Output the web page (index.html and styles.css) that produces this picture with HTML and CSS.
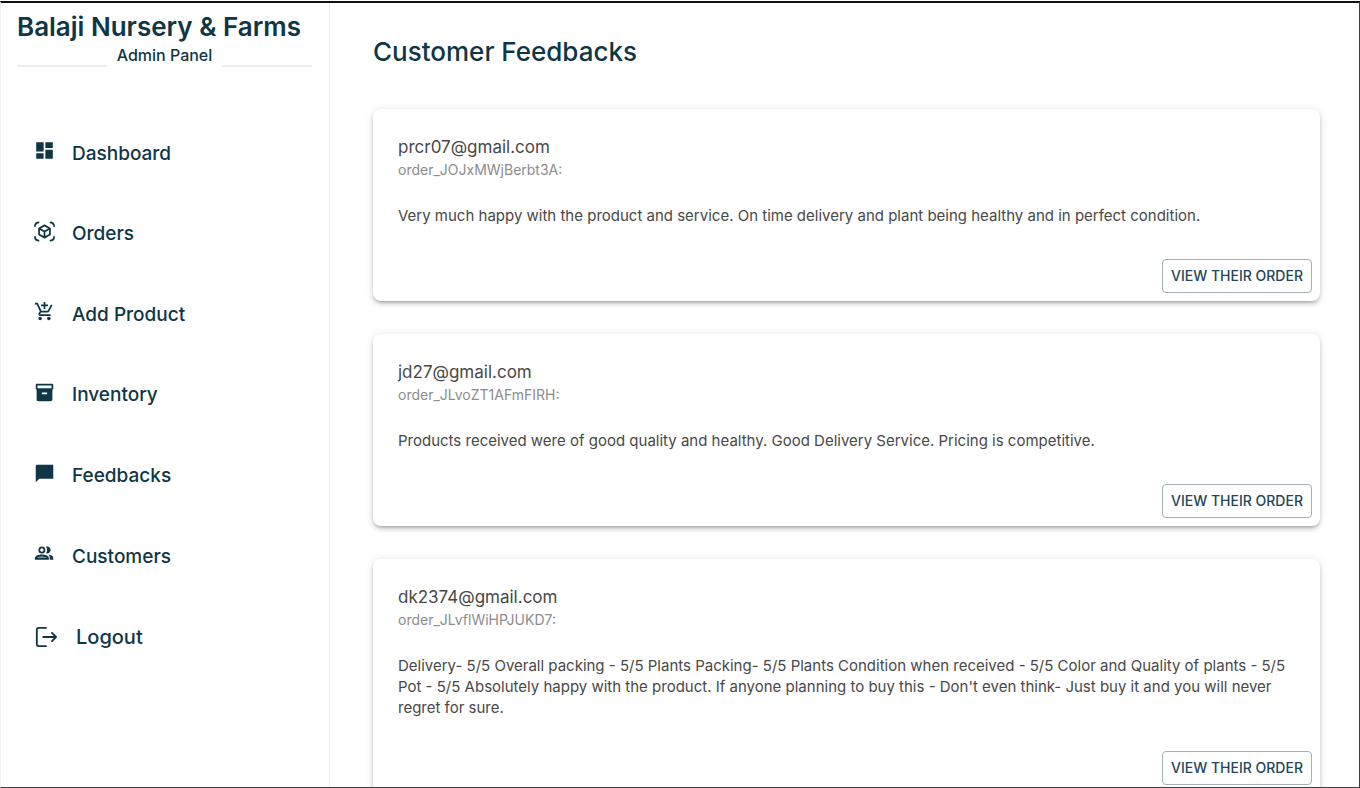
FILE: index.html
```html
<!DOCTYPE html>
<html lang="en">
<head>
<meta charset="utf-8">
<meta name="viewport" content="width=device-width, initial-scale=1">
<title>Customer Feedbacks - Balaji Nursery &amp; Farms</title>
<link rel="stylesheet" href="styles.css">
</head>
<body>
<div class="app">
  <aside class="sidebar">
    <div class="brand">Balaji Nursery &amp; Farms</div>
    <div class="panel-label"><span>Admin Panel</span></div>
    <nav>
      <ul class="menu">
        <li><a href="#dashboard"><svg class="icon" viewBox="0 0 24 24"><path d="M2.500 13h8.500V2.500H2.500V13zm0 8.500h8.500V15H2.500v6.500zm10.500 0h8.500V11H13v10.500zm0-19V9h8.500V2.500H13z"/></svg>Dashboard</a></li>
        <li><a href="#orders"><svg class="icon" viewBox="0 0 24 24"><g fill="none" stroke="currentColor" stroke-width="2"><path d="M1 6.500C1 3.500 3 1.500 6 1.500M18 1.500c3 0 5 2 5 5M23 17.500c0 3-2 5-5 5M6 22.500c-3 0-5-2-5-5"/><path d="M12 5l6.200 3.500v7L12 19l-6.200-3.500v-7zM5.800 8.500L12 12l6.200-3.500M12 12v7" stroke-linejoin="round"/></g></svg>Orders</a></li>
        <li><a href="#add-product"><svg class="icon" viewBox="0 0 24 24"><path d="M11 9h2V6h3V4h-3V1h-2v3H8v2h3v3zm-4 9c-1.100 0-1.990.9-1.990 2S5.900 22 7 22s2-.9 2-2-.9-2-2-2zm10 0c-1.100 0-1.990.9-1.990 2s.89 2 1.990 2 2-.9 2-2-.9-2-2-2zm-9.830-3.250l.03-.12.9-1.630h7.450c.75 0 1.410-.41 1.750-1.030l3.860-7.010L19.420 4l-1.100 2-2.760 5H8.530l-.13-.27L6.160 6l-.95-2-.94-2H1v2h2l3.600 7.590-1.350 2.450c-.16.28-.25.61-.25.960 0 1.100.9 2 2 2h12v-2H7.420c-.13 0-.25-.11-.25-.25z"/></svg>Add Product</a></li>
        <li><a href="#inventory"><svg class="icon" viewBox="0 0 24 24"><path fill-rule="evenodd" d="M3.500 2h17C21.500 2 22 2.700 22 3.500v4c0 .8-.4 1.200-1 1.400V20c0 1.200-.9 2-2 2H5c-1.100 0-2-.8-2-2V8.900C2.400 8.700 2 8.300 2 7.500v-4C2 2.700 2.500 2 3.500 2zM4 4v3h16V4zM9 12v2h6v-2z"/></svg>Inventory</a></li>
        <li><a href="#feedbacks" aria-current="page"><svg class="icon" viewBox="0 0 24 24"><path d="M22 2H3.500C2.700 2 2 2.700 2 3.500V22l4-4h16z"/></svg>Feedbacks</a></li>
        <li><a href="#customers"><svg class="icon" viewBox="0 0 24 24"><path fill-rule="evenodd" d="M9 4a4 4 0 1 1 0 8 4 4 0 0 1 0-8zm0 2a2 2 0 1 0 0 4 2 2 0 0 0 0-4z"/><path d="M15 4c2.200 0 4 1.800 4 4s-1.800 4-4 4c-.5 0-.9-.1-1.300-.2.900-1 1.300-2.300 1.300-3.800s-.4-2.800-1.300-3.800c.4-.1.8-.2 1.300-.2zM16.700 13.100c2.800.4 5.300 1.700 5.300 3.900v2h-4v-2c0-1.600-.5-2.900-1.300-3.900z"/><path fill-rule="evenodd" d="M9 13c-2.700 0-8 1.300-8 4v2h16v-2c0-2.700-5.300-4-8-4z"/><path d="M3.500 17c.8-1.200 3.400-2 5.500-2s4.700.8 5.500 2z" class="icon-tint"/></svg>Customers</a></li>
        <li><a href="#logout" class="logout"><svg class="icon icon-large" viewBox="0 0 24 24"><path fill="none" stroke="currentColor" stroke-width="2" stroke-linecap="round" stroke-linejoin="round" d="M12 2H4a2 2 0 0 0-2 2v16a2 2 0 0 0 2 2h8M9 12h14M18.500 7.500L23 12l-4.500 4.500"/></svg>Logout</a></li>
      </ul>
    </nav>
  </aside>
  <main class="content">
    <h1>Customer Feedbacks</h1>
    <div class="feedbacks">
      <article class="card">
        <h2>prcr07@gmail.com</h2>
        <p class="order">order_JOJxMWjBerbt3A:</p>
        <p class="message">Very much happy with the product and service. On time delivery and plant being healthy and in perfect condition.</p>
        <button type="button">VIEW THEIR ORDER</button>
      </article>
      <article class="card">
        <h2>jd27@gmail.com</h2>
        <p class="order">order_JLvoZT1AFmFIRH:</p>
        <p class="message">Products received were of good quality and healthy. Good Delivery Service. Pricing is competitive.</p>
        <button type="button">VIEW THEIR ORDER</button>
      </article>
      <article class="card">
        <h2>dk2374@gmail.com</h2>
        <p class="order">order_JLvflWiHPJUKD7:</p>
        <p class="message">Delivery- 5/5 Overall packing - 5/5 Plants Packing- 5/5 Plants Condition when received - 5/5 Color and Quality of plants - 5/5 Pot - 5/5 Absolutely happy with the product. If anyone planning to buy this - Don't even think- Just buy it and you will never regret for sure.</p>
        <button type="button">VIEW THEIR ORDER</button>
      </article>
    </div>
  </main>
</div>
</body>
</html>
```
FILE: styles.css
```css
* { box-sizing: border-box; }

body {
  margin: 0;
  padding-top: 1px;
  height: 100vh;
  overflow: hidden;
  background: #fff;
  color: #0f3646;
  font-family: Inter, "Liberation Sans", sans-serif;
}

.app {
  display: flex;
  height: 100%;
  border: 1px solid #3c3c3c;
  border-top: 2px solid #111;
  border-left-color: #f0f0f0;
  overflow: hidden;
}

.sidebar {
  flex: 0 0 329px;
  padding: 8px 17px 0 16px;
  border-right: 1px solid #ececec;
}

.brand {
  font-size: 26px;
  font-weight: 600;
  line-height: 32px;
  white-space: nowrap;
}

.panel-label {
  display: flex;
  align-items: flex-end;
  gap: 10px;
  font-size: 16px;
  font-weight: 500;
  line-height: 24px;
}

.panel-label::before,
.panel-label::after {
  content: "";
  flex: 1;
  border-bottom: 2px solid #ececec;
}

.menu {
  display: grid;
  grid-auto-rows: 1fr;
  height: 564px;
  margin: 46px 0 0;
  padding: 0;
  list-style: none;
}

.menu a {
  display: flex;
  align-items: center;
  gap: 17px;
  height: 100%;
  padding-left: 17px;
  color: inherit;
  font-size: 19px;
  font-weight: 500;
  text-decoration: none;
}

.menu .logout {
  gap: 18px;
  font-size: 20px;
}

.icon {
  width: 21px;
  height: 21px;
  margin-bottom: 5px;
  fill: currentColor;
}

.icon-large {
  width: 24px;
  height: 22px;
  margin-bottom: 0;
}

.icon-tint { fill: #7b8d94; }

.content {
  flex: 1;
  padding: 33px 39px 0 43px;
}

h1 {
  margin: 0 0 41px;
  font-size: 26px;
  font-weight: 500;
  line-height: 32px;
}

.feedbacks {
  display: grid;
  gap: 33px;
}

.card {
  display: flex;
  flex-direction: column;
  padding: 25px 8px 8px 25px;
  border-radius: 8px;
  background: #fff;
  box-shadow: 0 3px 3px -2px rgba(0, 0, 0, .2), 0 3px 4px rgba(0, 0, 0, .14), 0 1px 8px rgba(0, 0, 0, .12);
  color: #484848;
}

.card h2 {
  margin: 0;
  font-size: 17px;
  font-weight: 400;
  line-height: 26px;
}

.order {
  margin: 0;
  color: #8c8c8c;
  font-size: 14px;
  line-height: 20px;
}

.message {
  margin: 25px 16px 33px 0;
  font-size: 15px;
  line-height: 21px;
}

.card button {
  align-self: flex-end;
  height: 34px;
  padding: 0 8px;
  border: 1px solid #a3b0b5;
  border-radius: 4px;
  background: #fff;
  color: #24465a;
  font: 500 14px/20px Inter, "Liberation Sans", sans-serif;
  cursor: pointer;
}
```
